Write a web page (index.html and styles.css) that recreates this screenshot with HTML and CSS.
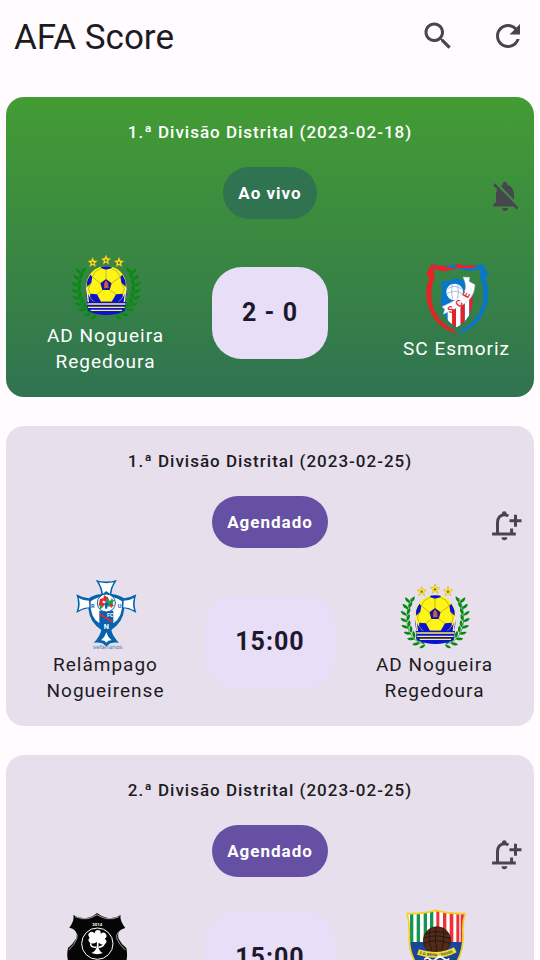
FILE: index.html
```html
<!DOCTYPE html>
<html lang="pt">
<head>
<meta charset="utf-8">
<meta name="viewport" content="width=device-width, initial-scale=1">
<title>AFA Score</title>
<link rel="stylesheet" href="styles.css">
</head>
<body>
<svg class="defs" aria-hidden="true">
  <defs>
    <symbol id="bell-add" viewBox="0 0 24 24">
      <path d="M3.4 18h15.8M7 18v-7.5C7 7 9 5.1 11.5 5.1c1 0 1.900.3 2.700.9M16.400 18v-3.700M19 5.200v8M15 9.200h8" fill="none" stroke="currentColor" stroke-width="2"/>
      <path d="M9.900 5.300V4.500a1.600 1.600 0 0 1 3.200 0v.8zM9.700 20.200h3.800a1.900 1.900 0 0 1-3.800 0z" fill="currentColor"/>
    </symbol>
    <g id="leaf"><path d="M0 0C-9-2-14-8-13-15-5-12 0-7 0 0ZM1-2C0-10 4-16 11-18 12-10 8-5 1-2Z"/></g>
    <g id="branch">
      <path d="M78 202C38 188 27 145 37 92L46 67" fill="none" stroke="#078a12" stroke-width="2"/>
      <use href="#leaf" transform="translate(44 82) scale(1.2)"/>
      <use href="#leaf" transform="translate(38 100) rotate(-5) scale(1.2)"/>
      <use href="#leaf" transform="translate(34 119) rotate(-10) scale(1.2)"/>
      <use href="#leaf" transform="translate(35 138) rotate(-18) scale(1.2)"/>
      <use href="#leaf" transform="translate(39 157) rotate(-25) scale(1.2)"/>
      <use href="#leaf" transform="translate(47 174) rotate(-35) scale(1.2)"/>
      <use href="#leaf" transform="translate(58 189) rotate(-45) scale(1.2)"/>
      <use href="#leaf" transform="translate(73 201) rotate(-60) scale(1.2)"/>
      <use href="#leaf" transform="translate(89 207) rotate(-75)"/>
    </g>
    <g id="star">
      <path d="M0-15 4-5 14-4 6 3 9 13 0 7-9 13-6 3-14-4-4-5Z" fill="#ffed16" stroke="#d3a51c" stroke-width="1.500"/>
      <circle r="3.500" cy="1" fill="#756159"/>
    </g>
    <symbol id="crest-nogueira" viewBox="13 9 210 219">
      <g class="laurel">
        <use href="#branch"/>
        <use href="#branch" transform="translate(237 0) scale(-1 1)"/>
      </g>
      <use href="#star" transform="translate(78 46)"/>
      <use href="#star" transform="translate(118 39)"/>
      <use href="#star" transform="translate(157 46)"/>
      <clipPath id="ball-clip"><circle cx="119" cy="117" r="59"/></clipPath>
      <circle cx="119" cy="142" r="60" fill="#0b12d0"/>
      <circle cx="119" cy="117" r="60" fill="#fff515"/>
      <g clip-path="url(#ball-clip)">
        <path d="M102 57h35l-3 7-16 4-14-4zM60 103l11-20 6 6-3 18-12 12zM178 103l-11-20-6 6 3 18 13 12zM71 140l20 2 12 22-14 9-20-12zM168 140l-20 2-13 22 14 9 20-12z" fill="#0b12d0"/>
        <path d="M118 96l17 13-6 20h-22l-6-20z" fill="#17159a"/>
        <path d="M118 68v28M77 89l24 20M161 89l-26 20M107 129l-16 13M129 129l19 13M103 164h32M77 89l10-16 17-9M161 89l-10-16-17-9M74 107l-9 18 6 15M164 107l9 18-5 15" fill="none" stroke="#a59a22" stroke-width="2"/>
      </g>
      <path d="M113 108l5-8 6 9 2 14-14 1z" fill="#c55b59"/>
      <path d="M60 164h118l-4 27q-25 13-55 13t-55-13z" fill="#0b12d0"/>
      <path d="M62 171h114M64 181h110M72 190h94" stroke="#fff15a" stroke-width="4"/>
      <path d="M60 122l5 43M178 122l-5 43" stroke="#fff1a2" stroke-width="4"/>
    </symbol>
  </defs>
</svg>

<div class="app">
  <header class="top-bar">
    <h1 class="app-title">AFA Score</h1>
    <button class="icon-button" type="button" aria-label="Pesquisar">
      <svg class="icon" viewBox="0 0 24 24"><path fill="currentColor" d="M15.500 14h-.79l-.28-.27C15.410 12.590 16 11.110 16 9.500 16 5.910 13.090 3 9.500 3S3 5.910 3 9.500 5.910 16 9.500 16c1.610 0 3.090-.59 4.230-1.570l.27.28v.79l5 4.990L20.490 19l-4.990-5zm-6 0C7.010 14 5 11.990 5 9.500S7.010 5 9.500 5 14 7.010 14 9.500 11.990 14 9.500 14z"/></svg>
    </button>
    <button class="icon-button" type="button" aria-label="Atualizar">
      <svg class="icon" viewBox="0 0 24 24"><path fill="currentColor" d="M17.650 6.350C16.200 4.900 14.210 4 12 4c-4.420 0-7.990 3.580-7.990 8s3.570 8 7.990 8c3.730 0 6.840-2.550 7.730-6h-2.080c-.82 2.330-3.040 4-5.650 4-3.310 0-6-2.690-6-6s2.690-6 6-6c1.660 0 3.140.69 4.220 1.780L13 11h7V4l-2.350 2.350z"/></svg>
    </button>
  </header>

  <main class="matches">
    <article class="match match-live">
      <h2 class="competition">1.ª Divisão Distrital (2023-02-18)</h2>
      <div class="status-row">
        <span class="status">Ao vivo</span>
        <button class="icon-button bell" type="button" aria-label="Notificações desligadas">
          <svg class="icon" viewBox="0 0 24 24"><path fill="currentColor" d="M20 18.690L7.840 6.140 5.270 3.490 4 4.760l2.800 2.800v.01c-.52.99-.8 2.160-.8 3.420v5l-2 2v1h13.730l2 2L21 19.720l-1-1.030zM12 22c1.110 0 2-.89 2-2h-4c0 1.110.89 2 2 2zm6-7.320V11c0-3.080-1.640-5.640-4.500-6.320V4c0-.83-.67-1.500-1.500-1.500s-1.500.67-1.500 1.500v.68c-.5.1-1 .3-1.440.56L18 14.680z"/></svg>
        </button>
      </div>
      <div class="teams">
        <div class="team">
          <svg class="crest" aria-hidden="true"><use href="#crest-nogueira"/></svg>
          <span class="team-name">AD Nogueira Regedoura</span>
        </div>
        <strong class="score">2 - 0</strong>
        <div class="team team-away">
          <svg class="crest" viewBox="21 36 210 219" aria-hidden="true">
            <path d="M32 66Q44 58 48 39L58 54 56 66Q59 74 59 80 47 103 49 142 54 203 112 235L126 250 109 243Q48 216 35 145 31 105 43 85 40 74 32 66Z" fill="#ed2024"/>
            <path d="M222 66Q210 58 206 39L196 54 198 66Q195 74 195 80 207 103 205 142 200 203 142 235L126 250 145 243Q206 216 219 145 223 105 211 85 214 74 222 66Z" fill="#0876ce"/>
            <path d="M48 39Q90 50 127 39q38 11 79 0l-12 16q-38 10-68-4-34 14-70 3z" fill="#0876ce"/>
            <path d="M48 39Q80 49 110 43l-22 5 38 3-30 8q-20 3-38-5z" fill="#ed2024"/>
            <path d="M120 42l7-3q28 8 57 4l-10 9-48-1z" fill="#ed2024"/>
            <clipPath id="sce-shield"><path d="M78 90q26 3 47-9 21 12 47 9-5 24 1 51 1 62-48 88-47-25-47-88 6-27 0-51z"/></clipPath>
            <g clip-path="url(#sce-shield)">
              <path d="M70 70h110v165H70z" fill="#0876ce"/>
              <path d="M98 168h13v70H98zM123 150h14v90h-14zM149 125h14v115h-14z" fill="#fff"/>
              <path d="M111 160h12v80h-12zM137 140h12v100h-12zM163 120h14v115h-14z" fill="#e3222a"/>
            </g>
            <circle cx="119" cy="123" r="25" fill="#fff"/>
            <path d="M98 113q21-14 42 1M96 128q23-14 46 0M112 100q-5 20 1 45M127 100q7 20 0 45" fill="none" stroke="#79a4cc" stroke-width="2"/>
            <path d="M144 78l20 1-2 12 18 10q-2 44-44 64-24 13-51 25l4-15-8-8q48-20 66-43 11-16-3-46z" fill="#fff" stroke="#a9bfd5" stroke-width="1.500"/>
            <g class="crest-letters" fill="#df2630" font-size="28">
              <text transform="translate(104 188) rotate(-28)">S</text>
              <text transform="translate(132 170) rotate(-43)">C</text>
              <text transform="translate(158 143) rotate(-62)">E</text>
            </g>
          </svg>
          <span class="team-name">SC Esmoriz</span>
        </div>
      </div>
    </article>

    <article class="match">
      <h2 class="competition">1.ª Divisão Distrital (2023-02-25)</h2>
      <div class="status-row">
        <span class="status">Agendado</span>
        <button class="icon-button bell" type="button" aria-label="Adicionar notificação">
          <svg class="icon" aria-hidden="true"><use href="#bell-add"/></svg>
        </button>
      </div>
      <div class="teams">
        <div class="team">
          <svg class="crest" viewBox="17 24 210 219" aria-hidden="true">
            <path d="M91 27q32 9 64 0-15 20-17 42 23 2 38 13 19-2 37-12-10 29 0 56-19-12-36-14-3 41-39 65 4 20 23 38-16-1-26 2l-12 9-12-9q-10-3-26-2 19-18 23-38-36-24-39-65-17 2-36 14 10-27 0-56 18 10 37 12 15-11 38-13-2-22-17-42z" fill="#0863ae"/>
            <path d="M101 34q22 5 44 0-10 17-12 34l-10-8-10 8q-2-17-12-34zM40 81q14 8 31 8l1 20q-17 0-32 9 6-19 0-37zM206 81q-14 8-31 8l-1 20q17 0 32 9-6-19 0-37zM123 184q4 14 16 24-10-1-16 7-6-8-16-7 12-10 16-24z" fill="#fff"/>
            <path d="M76 91q47-30 94 0 3 48-26 66v-38h-42v38q-29-18-26-66z" fill="#fff"/>
            <circle cx="123" cy="96" r="27" fill="#fff" stroke="#0863ae" stroke-width="3"/>
            <path d="M104 84l12-3-5 13 8 4-6 10-13-6z" fill="#e8262b"/>
            <path d="M126 76l7 14 9-6 1 18-13 6-8-13z" fill="#19a24b"/>
            <path d="M116 73l11 6-4 14-10-4z" fill="#e8262b"/>
            <path d="M101 99l12 10-8 6zM136 82l12 7-7 4z" fill="#19a24b"/>
            <path d="M132 97l14 6-9 8zM112 80l-9 9 4 2z" fill="#e8262b"/>
            <path d="M117 97l6-5 6 7-4 14h-5z" fill="#0863ae"/>
            <path d="M103 130l37 22" stroke="#e8262b" stroke-width="5"/>
            <g class="crest-letters" fill="#0863ae">
              <text x="77" y="111" font-size="17">R</text>
              <text x="157" y="111" font-size="17">U</text>
              <text x="125" y="139" font-size="16" fill="#fff">FC</text>
              <text x="115" y="173" font-size="22" fill="#fff">N</text>
            </g>
            <text class="crest-caption" x="127" y="234" font-size="18" text-anchor="middle" fill="#4777a8">veteranos</text>
          </svg>
          <span class="team-name">Relâmpago Nogueirense</span>
        </div>
        <strong class="score">15:00</strong>
        <div class="team team-away">
          <svg class="crest" aria-hidden="true"><use href="#crest-nogueira"/></svg>
          <span class="team-name">AD Nogueira Regedoura</span>
        </div>
      </div>
    </article>

    <article class="match">
      <h2 class="competition">2.ª Divisão Distrital (2023-02-25)</h2>
      <div class="status-row">
        <span class="status">Agendado</span>
        <button class="icon-button bell" type="button" aria-label="Adicionar notificação">
          <svg class="icon" aria-hidden="true"><use href="#bell-add"/></svg>
        </button>
      </div>
      <div class="teams">
        <div class="team team-narrow">
          <svg class="crest" viewBox="8 21 210 219" aria-hidden="true">
            <path d="M39 42q19 12 40 9 18-3 31-15 14 12 32 15 21 3 39-9-4 16 14 39-28 8-20 32 9 18 23 28 5 22-1 43-13 30-60 36l-27 14-27-14q-48-6-59-37-6-20-1-42 14-11 24-28 9-26-20-33 16-21 12-38z" fill="#050505"/>
            <path d="M26 84q31 8 23 30-7 18-24 33M193 84q-30 8-23 30 8 18 25 33M44 47q20 9 38 6 14-3 28-12 14 9 29 12 20 3 38-6" fill="none" stroke="#eee9ef" stroke-width="2"/>
            <circle cx="111" cy="128" r="47" fill="#050505" stroke="#fff" stroke-width="3"/>
            <path d="M110 123q-14 8-21 2-9-7-1-15-9-9 1-16 7-5 14 3 1-10 10-10 10 0 8 12 8-8 15-1 7 9-3 15 10 8 2 15-8 8-20-3l-1 15q6 14 14 16-17 7-35 0 13-5 16-17z" fill="#fff"/>
            <path d="M91 127q-2 12 17 12M131 127q0 10-17 12" fill="none" stroke="#fff" stroke-width="5"/>
            <text class="crest-letters" x="111" y="75" font-size="13" text-anchor="middle" fill="#fff">2014</text>
          </svg>
          <span class="team-name team-name-pending"></span>
        </div>
        <strong class="score">15:00</strong>
        <div class="team team-away team-medium">
          <svg class="crest" viewBox="21 21 210 219" aria-hidden="true">
            <clipPath id="stripe-shield"><path d="M37 38q46 1 86-10 40 11 87 10-8 26-6 60 3 102-81 133Q38 200 43 98 43 64 37 38z"/></clipPath>
            <g clip-path="url(#stripe-shield)">
              <path d="M30 20h190v105H30z" fill="#fff"/>
              <path d="M45 20h10v105H45zM65 20h10v105H65zM86 20h10v105H86zM105 20h10v105h-10z" fill="#159554"/>
              <path d="M124 20h9v105h-9zM144 20h10v105h-10zM164 20h11v105h-11zM184 20h24v105h-24z" fill="#ef3038"/>
              <path d="M193 20h4v105h-4z" fill="#fff"/>
              <path d="M30 123h190v117H30z" fill="#1a4698"/>
            </g>
            <path d="M37 38q46 1 86-10 40 11 87 10-8 26-6 60 3 102-81 133Q38 200 43 98 43 64 37 38z" fill="none" stroke="#f4cf25" stroke-width="5"/>
            <circle cx="126" cy="118" r="41" fill="#552a18" stroke="#24170f" stroke-width="2"/>
            <path d="M91 99q35-14 69 0M86 111q37-13 79 1M87 127q35-16 76 0M106 83q-9 32 7 74M123 78q-5 38 3 79M144 82q7 36-7 72" fill="none" stroke="#221910" stroke-width="3"/>
            <path id="club-ribbon" d="M69 153q61 20 112-7" fill="none" stroke="#f5dc31" stroke-width="17"/>
            <text class="crest-letters" font-size="11" fill="#273568" dy="4"><textPath href="#club-ribbon" startOffset="5">C.D. BEIRA - VOUGA</textPath></text>
            <path d="M88 176q8-10 17-1t19-2 21-1 17 0" fill="none" stroke="#fff" stroke-width="5"/>
          </svg>
          <span class="team-name team-name-pending"></span>
        </div>
      </div>
    </article>
  </main>
</div>
</body>
</html>
```

FILE: styles.css
```css
* {
  box-sizing: border-box;
}

body {
  margin: 0;
  background: #fffbfe;
  color: #1c1b1f;
  font-family: Roboto, "Liberation Sans", sans-serif;
  font-size: 17px;
  line-height: 26px;
  letter-spacing: 1px;
}

.defs {
  position: absolute;
  width: 0;
  height: 0;
}

.app {
  display: flex;
  flex-direction: column;
  height: 100vh;
}

.top-bar {
  display: flex;
  align-items: center;
  gap: 34px;
  padding: 14px;
}

.app-title {
  flex: 1;
  margin: 0;
  padding-top: 4px;
  font-size: 35px;
  font-weight: 400;
  line-height: 40px;
  letter-spacing: 0;
}

.icon-button {
  display: block;
  padding: 0;
  border: 0;
  background: none;
  color: #49454f;
  cursor: pointer;
}

.icon {
  display: block;
  width: 36px;
  height: 36px;
}

.matches {
  display: flex;
  flex: 1;
  flex-direction: column;
  gap: 29px;
  min-height: 0;
  padding: 25px 6px;
  overflow-y: auto;
  scrollbar-width: none;
}

.match {
  flex: none;
  padding: 22px 0;
  border-radius: 18px;
  background: #e7e0ec;
}

.match-live {
  background: linear-gradient(#439c33, #307351);
  color: #fff;
}

.competition {
  margin: 0 0 22px;
  font-size: 17px;
  font-weight: 500;
  line-height: 26px;
  text-align: center;
}

.status-row {
  display: grid;
  grid-template-columns: 1fr auto 1fr;
  align-items: center;
  margin-bottom: 31px;
  padding: 0 11px;
}

.status {
  grid-column: 2;
  padding: 13px 15px;
  border-radius: 26px;
  background: #6650a4;
  color: #fff;
  font-weight: 700;
}

.match-live .status {
  background: #307351;
}

.bell {
  justify-self: end;
  margin-top: 6px;
}

.teams {
  display: grid;
  grid-template-columns: 1fr auto 1fr;
  align-items: center;
  padding: 0 17px;
}

.team {
  display: flex;
  flex-direction: column;
  align-items: center;
  justify-self: start;
  width: 100%;
  max-width: 165px;
  padding: 0 7px;
}

.team-away {
  justify-self: end;
  width: auto;
}

.team-narrow {
  max-width: 149px;
}

.team-medium {
  width: 100%;
  max-width: 161px;
}

.crest {
  display: block;
  width: 70px;
  height: 73px;
}

.laurel {
  fill: #078a12;
}

.match-live .crest .laurel {
  stroke: #cfe8cf;
}

.crest-letters {
  font-family: Roboto, sans-serif;
  font-weight: 700;
  letter-spacing: 0;
}

.crest-caption {
  font-family: "DejaVu Sans", sans-serif;
  letter-spacing: 0;
}

.team-name {
  font-size: 19px;
  text-align: center;
}

.team-name-pending {
  min-height: 26px;
}

.score {
  padding: 30px;
  border-radius: 30px;
  background: #e8def8;
  color: #1d192b;
  font-size: 25px;
  font-weight: 700;
  line-height: 32px;
}
```
